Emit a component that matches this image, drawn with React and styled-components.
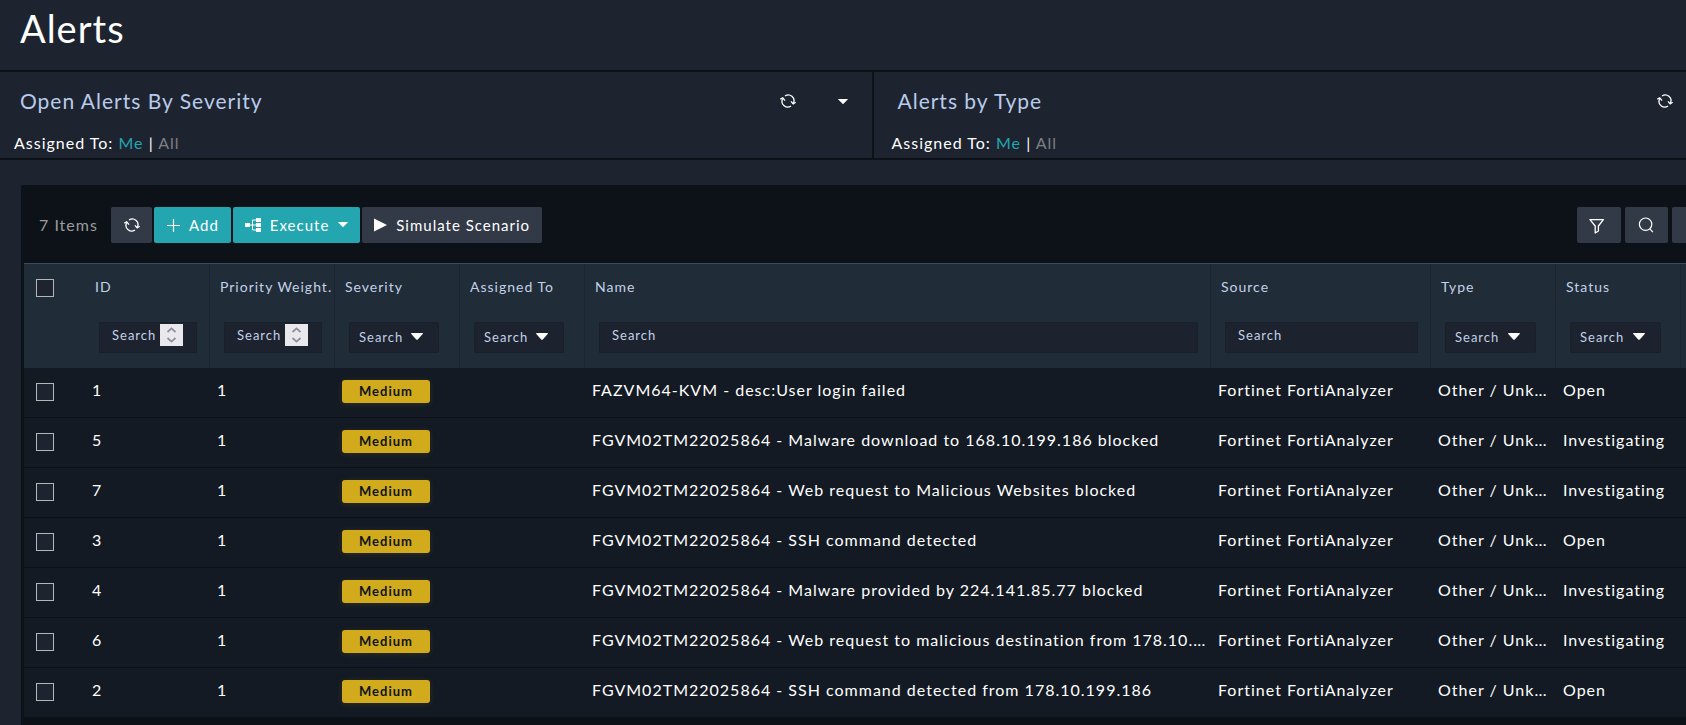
import React from "react";
import styled, { createGlobalStyle, css } from "styled-components";

const GlobalStyle = createGlobalStyle`
  * { box-sizing: border-box; }
  html { background: #1d2430; }
  body {
    margin: 0;
    overflow-x: hidden;
    background: #1d2430;
    color: #ffffff;
    font-family: Lato, "Liberation Sans", sans-serif;
    font-size: 16px;
    line-height: 20px;
    letter-spacing: 1px;
  }
  button, input, select { font: inherit; letter-spacing: inherit; color: inherit; }
`;

const Page = styled.div`
  overflow-x: hidden;
`;

const PageHeader = styled.header`
  height: 72px;
  padding: 6px 20px;
  border-bottom: 2px solid #0d1218;
`;

const PageTitle = styled.h1`
  margin: 0;
  font-size: 38px;
  line-height: 44px;
  font-weight: 400;
`;

const Widgets = styled.section`
  display: flex;
  margin-right: -63px;
  border-bottom: 2px solid #0d1218;
`;

const Widget = styled.article`
  flex: 1 1 0;
  min-width: 0;
  height: 86px;
  & + & {
    padding-left: 4px;
    border-left: 2px solid #0d1218;
  }
`;

const WidgetHead = styled.div`
  display: flex;
  align-items: center;
  padding: 15px 24px 0 20px;
`;

const WidgetTitle = styled.h2`
  flex: 1;
  margin: 0;
  font-size: 21px;
  line-height: 28px;
  font-weight: 400;
  color: #b9cbea;
`;

const IconButton = styled.button`
  display: flex;
  padding: 0;
  border: 0;
  background: none;
  cursor: pointer;
  & + & { margin-left: 42px; }
`;

const Assigned = styled.p`
  margin: 18px 0 0 14px;
  line-height: 20px;
  height: 24px;
`;

const AssignLink = styled.a`
  color: ${(p) => (p.$active ? "#23a6b0" : "#7d7f83")};
  text-decoration: none;
`;

const ListPanel = styled.main`
  margin: 25px -35px 0 21px;
  padding: 0 0 8px 3px;
  border-radius: 3px 0 0 0;
  background: #0d1218;
`;

const Toolbar = styled.div`
  display: flex;
  align-items: center;
  gap: 2px;
  padding: 22px 5px 20px 15px;
`;

const ItemCount = styled.span`
  width: 70px;
  padding-bottom: 1px;
  color: #9a9c9e;
`;

const ToolGroup = styled.div`
  display: flex;
  gap: 4px;
  margin-left: auto;
`;

const ToolButton = styled.button`
  display: flex;
  align-items: center;
  justify-content: center;
  height: 36px;
  padding: 0 12px 1px;
  border: 0;
  border-radius: 2px;
  background: ${(p) => (p.$primary ? "#23a6b0" : "#333a47")};
  color: #ffffff;
  font-size: 15px;
  gap: 9px;
  white-space: nowrap;
  cursor: pointer;
  ${(p) =>
    p.$square &&
    css`
      width: ${p.$square}px;
      padding: 0;
    `}
`;

const Table = styled.table`
  width: 100%;
  table-layout: fixed;
  border-collapse: separate;
  border-spacing: 0;
  border-top: 1px solid #3b4b5d;
`;

const Col = styled.col`
  width: ${(p) => (p.$w ? `${p.$w}px` : "auto")};
`;

const HeadCell = styled.th`
  height: 104px;
  padding: 13px 0 15px 10px;
  border-right: 1px solid ${(p) => (p.$plain ? "#212c39" : "#1b2531")};
  background: #212c39;
  vertical-align: top;
  text-align: left;
  font-size: 14px;
  font-weight: 400;
  color: #c3d1e6;
`;

const HeadLabel = styled.div`
  white-space: nowrap;
`;

const Filter = styled.div`
  display: ${(p) => (p.$select ? "grid" : "flex")};
  width: ${(p) => (p.$w ? `${p.$w}px` : "auto")};
  height: 31px;
  margin: 25px 12px 0 4px;
  border: 1px solid #18202b;
  border-radius: ${(p) => (p.$select ? "2px" : "0")};
  background: #1c222e;
  font-size: 13px;
  overflow: hidden;
`;

const FilterInput = styled.input`
  flex: 1;
  min-width: 0;
  padding: 0 0 6px 12px;
  border: 0;
  outline: 0;
  background: none;
  appearance: textfield;
  &::placeholder { color: inherit; opacity: 1; }
  &::-webkit-inner-spin-button { appearance: none; }
`;

const Stepper = styled.span`
  display: flex;
  align-items: center;
  justify-content: center;
  width: 23px;
  height: 22px;
  margin: 1px 13px 0 0;
  background: #e9e9ed;
`;

const FilterSelect = styled.select`
  grid-area: 1 / 1;
  appearance: none;
  padding: 0 0 2px 9px;
  border: 0;
  background: none;
  option { color: #1c222e; }
`;

const SelectArrow = styled.svg`
  grid-area: 1 / 1;
  align-self: center;
  justify-self: end;
  margin: 0 15px 2px 0;
  pointer-events: none;
`;

const Cell = styled.td`
  height: 50px;
  padding: 0 0 5px 7px;
  border-bottom: 1px solid #0d1218;
  background: #131a23;
  white-space: nowrap;
`;

const CheckCell = styled(Cell)`
  padding: 0 0 2px 12px;
`;

const Check = styled.input`
  display: block;
  appearance: none;
  width: 18px;
  height: 18px;
  margin: ${(p) => (p.$head ? "2px 0 0 2px" : "0")};
  border: 1px solid #b4b6b8;
  background: #1d2430;
  &:checked { background: #23a6b0; }
`;

const BadgeCell = styled(Cell)`
  padding-bottom: 3px;
`;

const Badge = styled.span`
  display: block;
  width: 88px;
  height: 23px;
  border-radius: 3px;
  background: #d1ab1b;
  box-shadow: 0 1px 6px rgba(209, 171, 27, 0.15);
  color: #10141a;
  font-size: 13px;
  font-weight: 700;
  line-height: 23px;
  text-align: center;
`;

const RefreshIcon = () => (
  <svg width="16" height="14" viewBox="0 0 16 14" fill="none" stroke="#fff" strokeWidth="1.3" aria-hidden="true">
    <path d="M5 2.1A5.6 5.6 0 0 1 13.4 9" />
    <path d="M11 11.9A5.6 5.6 0 0 1 2.6 5" />
    <path d="M10.9 7.4 13.2 9.8 15.7 8.2" />
    <path d="M.3 5.2 2.8 3.9 5 6.6" />
  </svg>
);

const CaretIcon = ({ size = 10 }) => (
  <svg width={size} height={size / 2} viewBox="0 0 10 5" aria-hidden="true">
    <path d="M.4 0h9.2q.5.2.1.6L5.5 4.8q-.5.4-1 0L.3.6Q-.1.2.4 0Z" fill="#fff" />
  </svg>
);

const PlusIcon = () => (
  <svg width="14" height="14" viewBox="0 0 14 14" stroke="#fff" strokeWidth="1.2" aria-hidden="true">
    <path d="M7.5 1v13M1 7.5h13" />
  </svg>
);

const FlowIcon = () => (
  <svg width="16" height="14" viewBox="0 0 16 14" aria-hidden="true">
    <path d="M0 5h5v4H0zM11 0h5v4h-5zM11 5h5v4h-5zM11 10h5v4h-5z" fill="#fff" />
    <path d="M5 7h6M11 2H7.5v10H11" fill="none" stroke="#fff" />
  </svg>
);

const PlayIcon = () => (
  <svg width="13" height="14" viewBox="0 0 13 14" aria-hidden="true">
    <path d="M0 .5 13 7 0 13.5Z" fill="#fff" />
  </svg>
);

const FilterIcon = () => (
  <svg width="20" height="18" viewBox="0 0 20 18" fill="none" stroke="#fff" strokeWidth="1.3" aria-hidden="true">
    <path d="M1 3.6h13.4L9.4 10v5L6.2 17V10Z" strokeLinejoin="round" />
  </svg>
);

const SearchIcon = () => (
  <svg width="18" height="16" viewBox="0 0 18 16" fill="none" stroke="#fff" strokeWidth="1.2" aria-hidden="true">
    <circle cx="7.6" cy="7.2" r="6.2" />
    <path d="m11.8 11.6 3 3.6" />
  </svg>
);

const ColumnsIcon = () => (
  <svg width="14" height="14" viewBox="0 0 14 14" stroke="#fff" strokeWidth="1.2" aria-hidden="true">
    <path d="M1 2h12M1 7h12M1 12h12" />
  </svg>
);

const columns = [
  { label: "ID", filter: "number", width: 125 },
  { label: "Priority Weight.", filter: "number", width: 125 },
  { label: "Severity", filter: "select", width: 125, box: 90 },
  { label: "Assigned To", filter: "select", width: 125, box: 90 },
  { label: "Name", filter: "text" },
  { label: "Source", filter: "text", width: 220 },
  { label: "Type", filter: "select", width: 125, box: 91 },
  { label: "Status", filter: "select", width: 125, box: 91 },
];

const alerts = [
  [1, "FAZVM64-KVM - desc:User login failed", "Open"],
  [5, "FGVM02TM22025864 - Malware download to 168.10.199.186 blocked", "Investigating"],
  [7, "FGVM02TM22025864 - Web request to Malicious Websites blocked", "Investigating"],
  [3, "FGVM02TM22025864 - SSH command detected", "Open"],
  [4, "FGVM02TM22025864 - Malware provided by 224.141.85.77 blocked", "Investigating"],
  [6, "FGVM02TM22025864 - Web request to malicious destination from 178.10.…", "Investigating"],
  [2, "FGVM02TM22025864 - SSH command detected from 178.10.199.186", "Open"],
];

function ColumnFilter({ column }) {
  const name = `Search ${column.label}`;
  if (column.filter === "select") {
    return (
      <Filter $select $w={column.box}>
        <FilterSelect aria-label={name}>
          <option>Search</option>
        </FilterSelect>
        <SelectArrow width="12" height="7" viewBox="0 0 12 7" aria-hidden="true">
          <path d="M.5 0h11q.7.3.2.9L6.8 6.5q-.8.6-1.6 0L.3.9Q-.2.3.5 0Z" fill="#fff" />
        </SelectArrow>
      </Filter>
    );
  }
  const numeric = column.filter === "number";
  return (
    <Filter $w={numeric ? 98 : undefined}>
      <FilterInput type={column.filter} placeholder="Search" aria-label={name} />
      {numeric && (
        <Stepper>
          <svg width="11" height="16" viewBox="0 0 11 16" fill="none" stroke="#8f8f9d" strokeWidth="1.8" aria-hidden="true">
            <path d="m1.5 5 4-3.6 4 3.6M1.5 11l4 3.6 4-3.6" />
          </svg>
        </Stepper>
      )}
    </Filter>
  );
}

function AlertWidget({ title }) {
  return (
    <Widget>
      <WidgetHead>
        <WidgetTitle>{title}</WidgetTitle>
        <IconButton aria-label="Refresh"><RefreshIcon /></IconButton>
        <IconButton aria-label="More"><CaretIcon /></IconButton>
      </WidgetHead>
      <Assigned>
        Assigned To: <AssignLink href="#me" $active>Me</AssignLink> | <AssignLink href="#all">All</AssignLink>
      </Assigned>
    </Widget>
  );
}

export default function App() {
  return (
    <Page>
      <GlobalStyle />
      <PageHeader>
        <PageTitle>Alerts</PageTitle>
      </PageHeader>
      <Widgets>
        <AlertWidget title="Open Alerts By Severity" />
        <AlertWidget title="Alerts by Type" />
      </Widgets>
      <ListPanel>
        <Toolbar>
          <ItemCount>7 Items</ItemCount>
          <ToolButton $square={41} aria-label="Refresh list"><RefreshIcon /></ToolButton>
          <ToolButton $primary><PlusIcon />Add</ToolButton>
          <ToolButton $primary><FlowIcon />Execute<CaretIcon /></ToolButton>
          <ToolButton><PlayIcon />Simulate Scenario</ToolButton>
          <ToolGroup>
            <ToolButton $square={44} aria-label="Filter"><FilterIcon /></ToolButton>
            <ToolButton $square={43} aria-label="Search"><SearchIcon /></ToolButton>
            <ToolButton $square={44} aria-label="Columns"><ColumnsIcon /></ToolButton>
          </ToolGroup>
        </Toolbar>
        <Table>
          <colgroup>
            <Col $w={61} />
            {columns.map((c) => <Col key={c.label} $w={c.width} />)}
            <Col $w={40} />
          </colgroup>
          <thead>
            <tr>
              <HeadCell $plain><Check $head type="checkbox" aria-label="Select all alerts" /></HeadCell>
              {columns.map((c) => (
                <HeadCell key={c.label} scope="col">
                  <HeadLabel>{c.label}</HeadLabel>
                  <ColumnFilter column={c} />
                </HeadCell>
              ))}
              <HeadCell $plain />
            </tr>
          </thead>
          <tbody>
            {alerts.map(([id, name, status]) => (
              <tr key={id}>
                <CheckCell><Check type="checkbox" aria-label={`Select alert ${id}`} /></CheckCell>
                <Cell>{id}</Cell>
                <Cell>1</Cell>
                <BadgeCell><Badge>Medium</Badge></BadgeCell>
                <Cell />
                <Cell>{name}</Cell>
                <Cell>Fortinet FortiAnalyzer</Cell>
                <Cell>Other / Unk…</Cell>
                <Cell>{status}</Cell>
                <Cell />
              </tr>
            ))}
          </tbody>
        </Table>
      </ListPanel>
    </Page>
  );
}
